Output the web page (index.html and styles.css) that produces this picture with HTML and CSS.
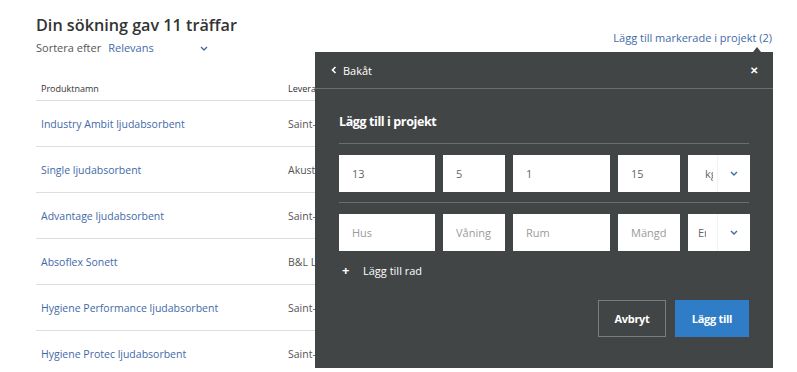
FILE: index.html
```html
<!DOCTYPE html>
<html lang="sv">
<head>
    <meta charset="UTF-8">
    <title>Sökresultat</title>
    <link rel="stylesheet" href="styles.css">
</head>
<body>

<div class="page">
    <!-- Result heading -->
    <div class="results-head">
        <div>
            <h1 class="title">Din sökning gav 11 träffar</h1>
            <div class="sort">
                <span class="sort-label">Sortera efter</span>
                <span class="sort-value">Relevans</span>
                <svg class="sort-chevron" width="8" height="5" viewBox="0 0 8 5"><polyline points="1,1 4,4 7,1" fill="none" stroke="#3f6aa8" stroke-width="1.4"/></svg>
            </div>
        </div>
        <a href="#" class="add-selected">Lägg till markerade i projekt (2)</a>
    </div>

    <!-- Product table -->
    <div class="table">
        <div class="row head">
            <div class="cell">Produktnamn</div>
            <div class="cell">Leverantör</div>
        </div>
        <div class="row"><a href="#" class="cell link">Industry Ambit ljudabsorbent</a><div class="cell">Saint-Gobain Ecophon</div></div>
        <div class="row"><a href="#" class="cell link">Single ljudabsorbent</a><div class="cell">Akustikmiljö</div></div>
        <div class="row"><a href="#" class="cell link">Advantage ljudabsorbent</a><div class="cell">Saint-Gobain Ecophon</div></div>
        <div class="row"><a href="#" class="cell link">Absoflex Sonett</a><div class="cell">B&amp;L Ljud</div></div>
        <div class="row"><a href="#" class="cell link">Hygiene Performance ljudabsorbent</a><div class="cell">Saint-Gobain Ecophon</div></div>
        <div class="row"><a href="#" class="cell link">Hygiene Protec ljudabsorbent</a><div class="cell">Saint-Gobain Ecophon</div></div>
    </div>

    <!-- Add to project popup -->
    <div class="popup">
        <div class="popup-header">
            <a href="#" class="back">
                <svg width="6" height="8" viewBox="0 0 6 8"><polyline points="4.5,1 1.5,4 4.5,7" fill="none" stroke="#fff" stroke-width="1.6"/></svg>
                Bakåt
            </a>
            <span class="close">&#x2715;</span>
        </div>
        <div class="popup-body">
            <div class="popup-title">Lägg till i projekt</div>

            <div class="field-row">
                <div class="field">13</div>
                <div class="field">5</div>
                <div class="field">1</div>
                <div class="field">15</div>
                <div class="field select">
                    <span class="select-text">kg</span>
                    <span class="select-btn"><svg width="8" height="5" viewBox="0 0 8 5"><polyline points="1,1 4,4 7,1" fill="none" stroke="#3f6aa8" stroke-width="1.4"/></svg></span>
                </div>
            </div>
            <div class="field-row last">
                <div class="field placeholder">Hus</div>
                <div class="field placeholder">Våning</div>
                <div class="field placeholder">Rum</div>
                <div class="field placeholder">Mängd</div>
                <div class="field select">
                    <span class="select-text wide">Enhet</span>
                    <span class="select-btn"><svg width="8" height="5" viewBox="0 0 8 5"><polyline points="1,1 4,4 7,1" fill="none" stroke="#3f6aa8" stroke-width="1.4"/></svg></span>
                </div>
            </div>

            <a href="#" class="add-row"><span class="plus">+</span>Lägg till rad</a>

            <div class="actions">
                <button class="btn btn-outline">Avbryt</button>
                <button class="btn btn-primary">Lägg till</button>
            </div>
        </div>
    </div>
</div>

</body>
</html>
```

FILE: styles.css
```css
/* Basic Reset */
* {
    margin: 0;
    padding: 0;
    box-sizing: border-box;
}
body {
    font-family: "Open Sans", Arial, sans-serif;
    background: #fff;
    color: #333;
    width: 797px;
    height: 372px;
    overflow: hidden;
}
a {
    text-decoration: none;
}
.page {
    position: relative;
    padding: 14px 26px 0 36px;
}
/* Heading */
.results-head {
    display: flex;
    justify-content: space-between;
    align-items: flex-start;
}
.title {
    font-size: 16.2px;
    font-weight: 600;
    line-height: 22px;
    color: #333;
}
.sort {
    display: flex;
    align-items: center;
    margin-top: 3px;
    font-size: 11px;
    line-height: 18px;
}
.sort-label {
    color: #555;
}
.sort-value {
    color: #3f6aa8;
    margin-left: 7px;
    width: 92px;
}
.sort-chevron {
    margin-top: 1px;
}
.add-selected {
    color: #3f6aa8;
    font-size: 11px;
    margin-top: 16px;
    margin-right: -1px;
}
/* Table */
.table {
    margin-top: 20px;
}
.row {
    display: flex;
    height: 46px;
    align-items: center;
    border-bottom: 1px solid #dedede;
}
.row.head {
    height: 24px;
}
.cell {
    padding-left: 5px;
    font-size: 10.5px;
    color: #555;
}
.row.head .cell {
    font-size: 9px;
    color: #333;
}
.cell:first-child {
    width: 247px;
}
.cell.link {
    color: #3f6aa8;
}
/* Popup */
.popup {
    position: absolute;
    left: 315px;
    top: 52px;
    width: 458px;
    height: 316px;
    background: #424546;
    color: #fff;
}
.popup::before {
    content: "";
    position: absolute;
    top: -5px;
    right: 12px;
    border-left: 4px solid transparent;
    border-right: 4px solid transparent;
    border-bottom: 5px solid #424546;
}
.popup-header {
    height: 37px;
    display: flex;
    align-items: center;
    justify-content: space-between;
    padding: 0 15px 0 16px;
    border-bottom: 1px solid #6b6e6f;
}
.back {
    color: #fff;
    font-size: 11px;
    display: flex;
    align-items: center;
    gap: 6px;
}
.close {
    font-size: 10px;
    font-weight: 700;
}
.popup-body {
    padding: 0 24px;
}
.popup-title {
    font-size: 12.5px;
    font-weight: 700;
    letter-spacing: -0.4px;
    line-height: 18px;
    padding: 24px 0 12px;
    border-bottom: 1px solid #6b6e6f;
}
.field-row {
    display: grid;
    grid-template-columns: 96px 62px 97px 62px 62px;
    gap: 8px;
    padding: 11px 0 10px;
    border-bottom: 1px solid #6b6e6f;
}
.field-row.last {
    border-bottom: none;
}
.field {
    height: 37px;
    background: #fff;
    color: #666;
    font-size: 11px;
    line-height: 37px;
    padding-left: 13px;
}
.field.placeholder {
    color: #9a9a9a;
}
.field.select {
    display: flex;
    padding-left: 0;
}
.select-text {
    flex: none;
    width: 25px;
    margin-right: 4px;
    padding-left: 17px;
    overflow: hidden;
    white-space: nowrap;
    color: #666;
}
.select-text.wide {
    padding-left: 10px;
    width: 18px;
    margin-right: 11px;
}
.select-btn {
    flex: 1;
    display: flex;
    align-items: center;
    justify-content: center;
    border-left: 1px solid #f3f3f3;
}
.add-row {
    display: flex;
    align-items: center;
    color: #fff;
    font-size: 11px;
    height: 18px;
}
.plus {
    font-weight: 700;
    font-size: 13px;
    width: 24px;
    padding-left: 3px;
}
.actions {
    display: flex;
    justify-content: flex-end;
    gap: 9px;
    margin-top: 21px;
}
.btn {
    height: 37px;
    font-family: inherit;
    font-size: 11px;
    font-weight: 700;
    letter-spacing: -0.3px;
    color: #fff;
    cursor: pointer;
}
.btn-outline {
    width: 68px;
    background: transparent;
    border: 1px solid #7a7d7e;
}
.btn-primary {
    width: 74px;
    background: #2f7dc6;
    border: none;
}
```
